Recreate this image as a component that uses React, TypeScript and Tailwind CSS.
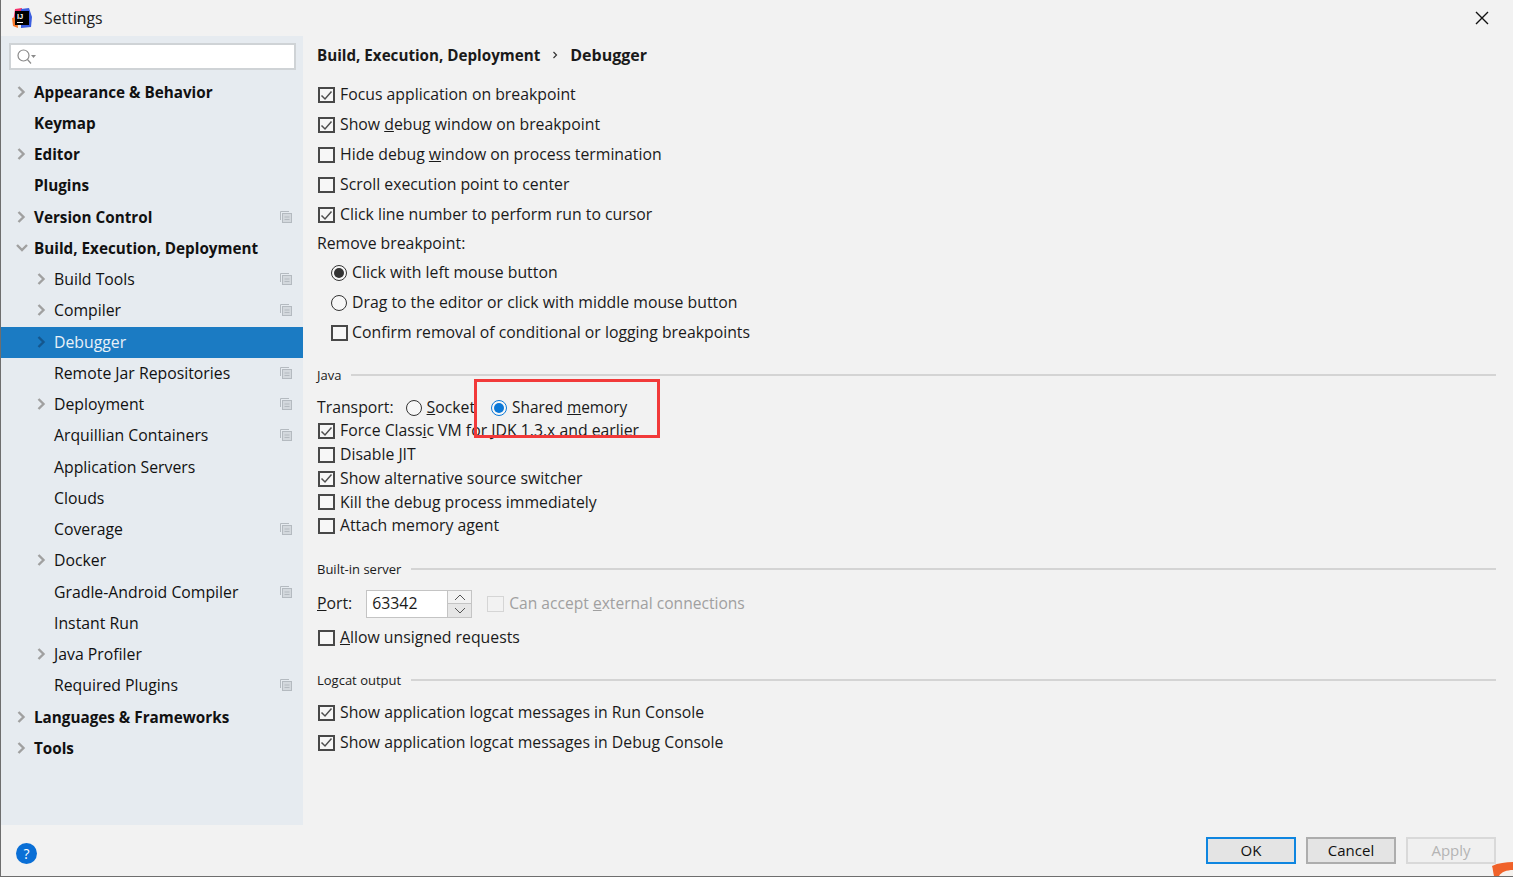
import React from 'react';

const FONT = "font-['Open_Sans',_'Noto_Sans',sans-serif]";

const Chevron: React.FC<{ open?: boolean; dark?: boolean }> = ({ open, dark }) => (
  <svg width="12" height="12" viewBox="0 0 12 12" fill="none" stroke={dark ? '#14578e' : '#a0a0a0'} strokeWidth="2.4">
    {open ? <path d="M1 3 L6 8 L11 3" /> : <path d="M2.5 1 L7.5 6 L2.5 11" />}
  </svg>
);

const CopyIcon = () => (
  <svg width="12" height="12" viewBox="0 0 12 12" fill="none" stroke="#b4bac0" strokeWidth="1">
    <path d="M0.5 9 V0.5 H9" />
    <rect x="2.5" y="2.5" width="9" height="9" fill="#d3d8dd" />
    <path d="M4.5 6 H9.5 M4.5 8.5 H9.5" />
  </svg>
);

interface TreeItem {
  label: string;
  level: 0 | 1;
  arrow?: boolean;
  open?: boolean;
  copy?: boolean;
  selected?: boolean;
}

const tree: TreeItem[] = [
  { label: 'Appearance & Behavior', level: 0, arrow: true },
  { label: 'Keymap', level: 0 },
  { label: 'Editor', level: 0, arrow: true },
  { label: 'Plugins', level: 0 },
  { label: 'Version Control', level: 0, arrow: true, copy: true },
  { label: 'Build, Execution, Deployment', level: 0, arrow: true, open: true },
  { label: 'Build Tools', level: 1, arrow: true, copy: true },
  { label: 'Compiler', level: 1, arrow: true, copy: true },
  { label: 'Debugger', level: 1, arrow: true, selected: true },
  { label: 'Remote Jar Repositories', level: 1, copy: true },
  { label: 'Deployment', level: 1, arrow: true, copy: true },
  { label: 'Arquillian Containers', level: 1, copy: true },
  { label: 'Application Servers', level: 1 },
  { label: 'Clouds', level: 1 },
  { label: 'Coverage', level: 1, copy: true },
  { label: 'Docker', level: 1, arrow: true },
  { label: 'Gradle-Android Compiler', level: 1, copy: true },
  { label: 'Instant Run', level: 1 },
  { label: 'Java Profiler', level: 1, arrow: true },
  { label: 'Required Plugins', level: 1, copy: true },
  { label: 'Languages & Frameworks', level: 0, arrow: true },
  { label: 'Tools', level: 0, arrow: true },
];

const TreeRow: React.FC<{ item: TreeItem }> = ({ item }) => (
  <div
    className={`flex items-center h-[31.25px] pb-[2px] pr-[11px] leading-[24px] ${item.level === 0 ? 'pl-[15px]' : 'pl-[35px]'} ${
      item.selected ? 'bg-[#1b7bc3] text-[#e9f1f8]' : 'text-[#111]'
    }`}
  >
    <span className="w-[18px] flex-shrink-0 flex items-center">
      {item.arrow && <Chevron open={item.open} dark={item.selected} />}
    </span>
    <span className={`flex-1 whitespace-nowrap ${item.level === 0 ? 'font-bold text-[15.25px]' : 'text-[15.8px]'}`}>{item.label}</span>
    {item.copy && <CopyIcon />}
  </div>
);

const Check: React.FC<{ checked?: boolean; disabled?: boolean }> = ({ checked, disabled }) => (
  <span
    className={`w-[17px] h-4 flex-shrink-0 flex items-center justify-center ${
      disabled ? 'border border-[#d5d5d5]' : 'border-2 border-[#484848] bg-[#f7f7f7]'
    }`}
  >
    {checked && (
      <svg width="13" height="13" viewBox="0 0 13 13" fill="none" stroke="#505050" strokeWidth="1.5">
        <path d="M1.5 6.5 L5 10 L11.5 2.5" />
      </svg>
    )}
  </span>
);

const Radio: React.FC<{ checked?: boolean; blue?: boolean }> = ({ checked, blue }) => (
  <span
    className={`w-4 h-4 rounded-full flex-shrink-0 flex items-center justify-center border-[1.5px] ${
      blue ? 'border-[#0b78d7]' : 'border-[#333]'
    } bg-[#f7f7f7]`}
  >
    {checked && <span className={`w-[10px] h-[10px] rounded-full ${blue ? 'bg-[#0b78d7]' : 'bg-[#333]'}`} />}
  </span>
);

const CheckRow: React.FC<{ checked?: boolean; h: string; children: React.ReactNode }> = ({ checked, h, children }) => (
  <div className={`flex items-center gap-[5px] pl-px whitespace-nowrap ${h}`}>
    <Check checked={checked} />
    <span>{children}</span>
  </div>
);

const RadioRow: React.FC<{ checked?: boolean; children: React.ReactNode }> = ({ checked, children }) => (
  <div className="flex items-center gap-[5px] whitespace-nowrap h-[30px] pl-[14px]">
    <Radio checked={checked} />
    <span>{children}</span>
  </div>
);

const Section: React.FC<{ title: string; className: string }> = ({ title, className }) => (
  <div className={`flex items-center gap-[10px] text-[13px] h-5 ${className}`}>
    <span className="whitespace-nowrap">{title}</span>
    <span className="flex-1 h-[2px] mb-[2px] bg-[#d4d4d4]" />
  </div>
);

const Btn: React.FC<{ className: string; children: React.ReactNode }> = ({ className, children }) => (
  <button className={`w-[90px] h-[27px] text-[15px] flex items-center justify-center ${className}`}>{children}</button>
);

const Logo = () => (
  <svg width="22" height="22" viewBox="0 0 22 22" className="flex-shrink-0">
    <path d="M4 1 L11 0 L11 10 L2 14 Z" fill="#f5326c" />
    <path d="M10 1 L18 0 L21 9 L20 19 L10 20 Z" fill="#3b5ee0" />
    <path d="M1 10 L6 9 L7 20 L2 18 Z" fill="#f97a2c" />
    <rect x="4" y="3" width="14" height="14" fill="#000" />
    <text x="6" y="10.5" fontSize="7.5" fontWeight="700" fill="#fff" fontFamily="'Liberation Sans',sans-serif">IJ</text>
    <rect x="6" y="14" width="6" height="1" fill="#fff" />
  </svg>
);

export default function App() {
  return (
    <div className={`relative w-[1513px] h-[877px] overflow-hidden flex flex-col bg-[#f2f2f2] text-[#1a1a1a] text-[15.8px] border-l border-b border-[#6e6e6e] ${FONT}`}>
      <div className="h-9 flex items-center pl-[10px] pr-[24px] pt-px flex-shrink-0">
        <Logo />
        <span className="ml-[11px] text-[15.8px] text-[#222]">Settings</span>
        <svg width="14" height="14" viewBox="0 0 14 14" stroke="#111" strokeWidth="1.4" className="ml-auto -mt-[2px]">
          <path d="M1 1 L13 13 M13 1 L1 13" />
        </svg>
      </div>

      <div className="flex flex-1 min-h-0">
        <aside className="w-[302px] flex-shrink-0 bg-[#e6ebf0] flex flex-col pt-[7px]">
          <div className="ml-2 mr-[7px] h-[27px] bg-white border-2 border-[#cfd3d6] flex items-center pl-[5px] flex-shrink-0">
            <svg width="22" height="18" viewBox="0 0 22 18" fill="none" stroke="#8a8a8a" strokeWidth="1.2">
              <circle cx="7.5" cy="7.5" r="5.5" />
              <path d="M11.5 11.5 L15 15.5" />
              <path d="M15 7 H20 L17.5 10 Z" fill="#8a8a8a" stroke="none" />
            </svg>
          </div>
          <div className="mt-[6.875px]">
            {tree.map((item) => (
              <TreeRow key={item.label} item={item} />
            ))}
          </div>
        </aside>

        <main className="flex-1 min-w-0 pl-[14px] pr-[17px] flex flex-col">
          <div className="flex items-center h-[38px] font-bold flex-shrink-0 text-[15.2px]">
            <span>Build, Execution, Deployment</span>
            <svg width="8" height="8" viewBox="0 0 8 8" fill="none" stroke="#333" strokeWidth="1.2" className="mx-[11px]">
              <path d="M2.5 1 L5.5 4 L2.5 7" />
            </svg>
            <span className="text-[16px]">Debugger</span>
          </div>

          <div className="mt-[6px]">
            <CheckRow checked h="h-[30px]">Focus application on breakpoint</CheckRow>
            <CheckRow checked h="h-[30px]">Show <u>d</u>ebug window on breakpoint</CheckRow>
            <CheckRow h="h-[30px]">Hide debug <u>w</u>indow on process termination</CheckRow>
            <CheckRow h="h-[30px]">Scroll execution point to center</CheckRow>
            <CheckRow checked h="h-[30px]">Click line number to perform run to cursor</CheckRow>
          </div>
          <div className="h-[28px] flex items-center">Remove breakpoint:</div>
          <RadioRow checked>Click with left mouse button</RadioRow>
          <RadioRow>Drag to the editor or click with middle mouse button</RadioRow>
          <div className="flex items-center gap-[4px] whitespace-nowrap h-[30px] pl-[14px]">
            <Check />
            <span>Confirm removal of conditional or logging breakpoints</span>
          </div>

          <Section title="Java" className="mt-[18px]" />
          <div className="flex items-center h-[23px] mt-[10.2px] whitespace-nowrap">
            <span>Transport:</span>
            <span className="ml-[12px]"><Radio /></span>
            <span className="ml-[5px]"><u>S</u>ocket</span>
            <span className="ml-[16px]"><Radio checked blue /></span>
            <span className="ml-[5px] text-[15.4px]">Shared <u>m</u>emory</span>
          </div>
          <CheckRow checked h="h-[23.8px]">Force Class<u>i</u>c VM for JDK 1.3.x and earlier</CheckRow>
          <CheckRow h="h-[23.8px]">Disable JIT</CheckRow>
          <CheckRow checked h="h-[23.8px]">Show alternative source switcher</CheckRow>
          <CheckRow h="h-[23.8px]">Kill the debug process immediately</CheckRow>
          <CheckRow h="h-[23.8px]">Attach memory agent</CheckRow>

          <Section title="Built-in server" className="mt-[21.8px]" />
          <div className="flex items-center h-[28px] mt-[10px] whitespace-nowrap">
            <span><u>P</u>ort:</span>
            <div className="ml-[14px] flex h-[28px] w-[106px] border border-[#c4c4c4]">
              <span className="flex-1 bg-white pl-[5px] flex items-center">63342</span>
              <div className="w-[24px] flex flex-col border-l border-[#c4c4c4] bg-[#f2f2f2]">
                <span className="flex-1 flex items-center justify-center border-b border-[#c4c4c4]">
                  <svg width="12" height="7" viewBox="0 0 12 7" fill="none" stroke="#555"><path d="M1 6 L6 1 L11 6" /></svg>
                </span>
                <span className="flex-1 flex items-center justify-center bg-[#e6e6e6]">
                  <svg width="12" height="7" viewBox="0 0 12 7" fill="none" stroke="#555"><path d="M1 1 L6 6 L11 1" /></svg>
                </span>
              </div>
            </div>
            <span className="ml-[15px]"><Check disabled /></span>
            <span className="ml-[5px] text-[15.6px] text-[#a0a0a0]">Can accept <u>e</u>xternal connections</span>
          </div>
          <CheckRow h="h-[30px] mt-[5px]"><u>A</u>llow unsigned requests</CheckRow>

          <Section title="Logcat output" className="mt-[18px]" />
          <div className="mt-[7px]">
            <CheckRow checked h="h-[30px]">Show application logcat messages in Run Console</CheckRow>
            <CheckRow checked h="h-[30px]">Show application logcat messages in Debug Console</CheckRow>
          </div>
        </main>
      </div>

      <footer className="h-[51px] flex-shrink-0 flex items-center pl-[15px] pr-[17px] gap-[10px]">
        <span className="w-[21px] h-[21px] mt-[5px] rounded-full bg-[#0a6fd6] text-white text-[14px] flex items-center justify-center mr-auto">?</span>
        <Btn className="border-2 border-[#0f86e0] bg-[#e4e4e4] text-[#111]">OK</Btn>
        <Btn className="border-2 border-[#adadad] bg-[#e4e4e4] text-[#111]">Cancel</Btn>
        <Btn className="border-2 border-[#d9d9d9] bg-[#f0f0f0] text-[#b4b4b4]">Apply</Btn>
      </footer>

      {/* annotation drawn over the screenshot */}
      <div className="absolute left-[473px] top-[379px] w-[186px] h-[59px] border-[3px] border-[#f23a3a]" />
      {/* cut-off watermark in the corner */}
      <svg width="21" height="14" viewBox="0 0 21 14" className="absolute right-0 bottom-0">
        <path d="M0 4 C6 1 14 0 21 0 V14 H2 C1 10 1 7 0 4 Z" fill="#f0622a" />
        <path d="M7 14 C9 10 15 8 21 8 V14 Z" fill="#f6f2ee" />
      </svg>
    </div>
  );
}
